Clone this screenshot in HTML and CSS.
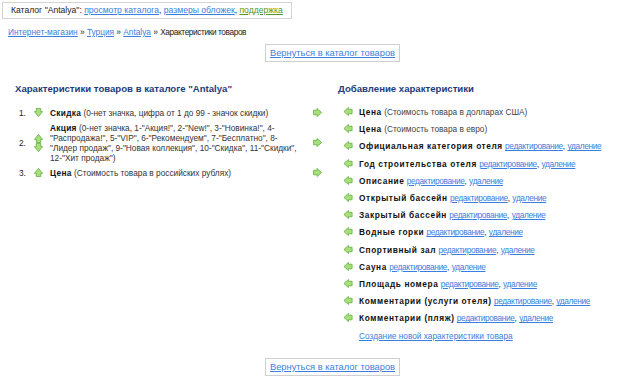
FILE: index.html
```html
<!DOCTYPE html>
<html lang="ru">
<head>
  <meta charset="UTF-8">
  <title>Характеристики товаров</title>
  <link rel="stylesheet" href="styles.css">
</head>
<body>

  <svg class="sprite" xmlns="http://www.w3.org/2000/svg">
    <symbol id="arr-down" viewBox="0 0 10 10">
      <polygon points="2.5,0.5 7.5,0.5 7.5,4 9.5,4 5,9.5 0.5,4 2.5,4" />
    </symbol>
    <symbol id="arr-up" viewBox="0 0 10 10">
      <polygon points="2.5,9.5 7.5,9.5 7.5,6 9.5,6 5,0.5 0.5,6 2.5,6" />
    </symbol>
    <symbol id="arr-right" viewBox="0 0 10 10">
      <polygon points="0.5,2.5 0.5,7.5 4.5,7.5 4.5,9.5 9.5,5 4.5,0.5 4.5,2.5" />
    </symbol>
    <symbol id="arr-left" viewBox="0 0 10 10">
      <polygon points="9.5,2.5 9.5,7.5 5.5,7.5 5.5,9.5 0.5,5 5.5,0.5 5.5,2.5" />
    </symbol>
  </svg>

  <div class="page">
    <!-- Catalog toolbar -->
    <div class="catalog-bar">
      Каталог "Antalya": <a href="#">просмотр каталога</a>, <a href="#">размеры обложек</a>, <a href="#" class="support">поддержка</a>
    </div>

    <div class="crumbs">
      <a href="#">Интернет-магазин</a> &raquo; <a href="#">Турция</a> &raquo; <a href="#">Antalya</a> &raquo; <span class="current">Характеристики товаров</span>
    </div>

    <div class="back"><a href="#">Вернуться в каталог товаров</a></div>

    <div class="columns">
      <!-- Characteristics already in the catalog -->
      <div class="col col-left">
        <h2>Характеристики товаров в каталоге "Antalya"</h2>
        <div class="props">
          <div class="prop">
            <span class="num">1.</span>
            <span class="moves"><svg class="ico"><use href="#arr-down"/></svg></span>
            <span class="text"><b>Скидка</b> (0-нет значка, цифра от 1 до 99 - значок скидки)</span>
            <span class="out"><svg class="ico"><use href="#arr-right"/></svg></span>
          </div>
          <div class="prop">
            <span class="num">2.</span>
            <span class="moves">
              <svg class="ico"><use href="#arr-up"/></svg>
              <svg class="ico"><use href="#arr-down"/></svg>
            </span>
            <span class="text"><b>Акция</b> (0-нет значка, 1-"Акция!", 2-"New!", 3-"Новинка!", 4-"Распродажа!", 5-"VIP", 6-"Рекомендуем", 7-"Бесплатно", 8-"Лидер продаж", 9-"Новая коллекция", 10-"Скидка", 11-"Скидки", 12-"Хит продаж")</span>
            <span class="out"><svg class="ico"><use href="#arr-right"/></svg></span>
          </div>
          <div class="prop">
            <span class="num">3.</span>
            <span class="moves"><svg class="ico"><use href="#arr-up"/></svg></span>
            <span class="text"><b>Цена</b> (Стоимость товара в российских рублях)</span>
            <span class="out"><svg class="ico"><use href="#arr-right"/></svg></span>
          </div>
        </div>
      </div>

      <!-- Characteristics that can be added -->
      <div class="col col-right">
        <h2>Добавление характеристики</h2>
        <ul class="avail">
          <li><svg class="ico"><use href="#arr-left"/></svg><b>Цена</b> <span class="note">(Стоимость товара в долларах США)</span></li>
          <li><svg class="ico"><use href="#arr-left"/></svg><b>Цена</b> <span class="note">(Стоимость товара в евро)</span></li>
          <li><svg class="ico"><use href="#arr-left"/></svg><b>Официальная категория отеля</b> <a href="#">редактирование</a>, <a href="#">удаление</a></li>
          <li><svg class="ico"><use href="#arr-left"/></svg><b>Год строительства отеля</b> <a href="#">редактирование</a>, <a href="#">удаление</a></li>
          <li><svg class="ico"><use href="#arr-left"/></svg><b>Описание</b> <a href="#">редактирование</a>, <a href="#">удаление</a></li>
          <li><svg class="ico"><use href="#arr-left"/></svg><b>Открытый бассейн</b> <a href="#">редактирование</a>, <a href="#">удаление</a></li>
          <li><svg class="ico"><use href="#arr-left"/></svg><b>Закрытый бассейн</b> <a href="#">редактирование</a>, <a href="#">удаление</a></li>
          <li><svg class="ico"><use href="#arr-left"/></svg><b>Водные горки</b> <a href="#">редактирование</a>, <a href="#">удаление</a></li>
          <li><svg class="ico"><use href="#arr-left"/></svg><b>Спортивный зал</b> <a href="#">редактирование</a>, <a href="#">удаление</a></li>
          <li><svg class="ico"><use href="#arr-left"/></svg><b>Сауна</b> <a href="#">редактирование</a>, <a href="#">удаление</a></li>
          <li><svg class="ico"><use href="#arr-left"/></svg><b>Площадь номера</b> <a href="#">редактирование</a>, <a href="#">удаление</a></li>
          <li><svg class="ico"><use href="#arr-left"/></svg><b>Комментарии (услуги отеля)</b> <a href="#">редактирование</a>, <a href="#">удаление</a></li>
          <li><svg class="ico"><use href="#arr-left"/></svg><b>Комментарии (пляж)</b> <a href="#">редактирование</a>, <a href="#">удаление</a></li>
          <li class="create"><a href="#">Создание новой характеристики товара</a></li>
        </ul>
      </div>
    </div>

    <div class="back"><a href="#">Вернуться в каталог товаров</a></div>
  </div>

</body>
</html>
```

FILE: styles.css
```css
/* Global styles */
body {
  margin: 0;
  background: #fff;
  font-family: "Liberation Sans", Arial, sans-serif;
  font-size: 8.3px;
  color: #333;
}

a {
  color: #3a7ee0;
  text-decoration: underline;
}

b {
  color: #111;
  letter-spacing: 0.6px;
}

.sprite {
  display: none;
}

.page {
  padding-top: 2px;
}

/* Top toolbar */
.catalog-bar {
  display: inline-block;
  margin-left: 2px;
  padding: 0 8px;
  line-height: 15px;
  border: 1px solid #d4d4d4;
  font-size: 8.6px;
  color: #222;
}

.catalog-bar .support {
  color: #4f9a2a;
}

/* Breadcrumbs */
.crumbs {
  margin: 8px 0 0 8px;
  line-height: 10px;
  color: #222;
}

.crumbs .current {
  letter-spacing: -0.4px;
}

/* Back button */
.back {
  margin: 7px 0 0 265px;
  width: 133px;
  border: 1px solid #d0d0d0;
  line-height: 16px;
  text-align: center;
  font-size: 9.3px;
}

.back:last-child {
  margin-top: 13px;
}

/* Two columns */
.columns {
  display: flex;
  margin-top: 21px;
}

.col h2 {
  margin: 0;
  font-size: 9.6px;
  line-height: 12px;
  color: #1c3c7a;
}

.col-left {
  width: 322px;
  margin-left: 8px;
}

.col-left h2 {
  padding-left: 7px;
}

.col-right {
  flex: 1;
}

.col-right h2 {
  padding-left: 8px;
}

/* Catalog characteristics */
.props {
  margin-top: 10px;
}

.prop {
  display: grid;
  grid-template-columns: 15px 16px 252px 19px;
  align-items: center;
  padding: 2.6px 0 2.6px 11px;
  line-height: 10px;
}

.prop b {
  letter-spacing: 0.3px;
}

.prop .num {
  color: #222;
}

.prop .moves {
  display: flex;
  flex-direction: column;
  gap: 0.5px;
}

.prop .out {
  margin-left: 11px;
}

.ico {
  display: block;
  width: 9px;
  height: 9px;
  fill: #a8de7e;
  stroke: #6cb648;
  stroke-width: 1;
}

/* Available characteristics */
.avail {
  list-style: none;
  margin: 9px 0 0;
  padding: 0 0 0 13px;
}

.avail li {
  line-height: 17.2px;
  white-space: nowrap;
}

.avail li .ico {
  display: inline-block;
  vertical-align: -1px;
  margin-right: 6px;
  width: 10px;
}

.avail li a {
  letter-spacing: -0.35px;
}

.avail .create a {
  letter-spacing: 0;
}

.avail .note {
  color: #444;
}

.avail .create {
  padding-left: 16px;
}
```
